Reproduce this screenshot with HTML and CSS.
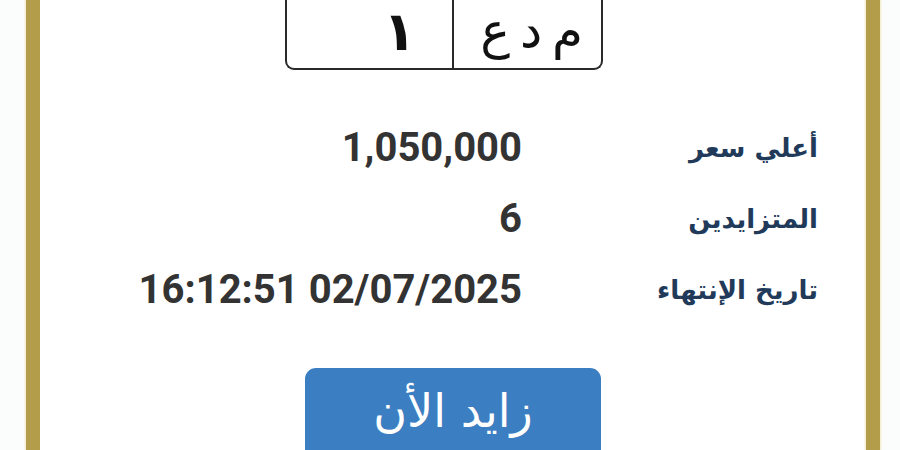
FILE: index.html
```html
<!DOCTYPE html>
<html lang="ar">
<head>
<meta charset="utf-8">
<link rel="stylesheet" href="styles.css">
</head>
<body>
<div class="frame">
  <div class="bar"></div>
  <main class="card">
    <div class="plate" dir="rtl">
      <div class="cell letters">م د ع</div>
      <div class="cell number">١</div>
    </div>
    <div class="rows" dir="rtl">
      <div class="label">أعلي سعر</div>
      <div class="value" dir="ltr">1,050,000</div>
      <div class="label">المتزايدين</div>
      <div class="value" dir="ltr">6</div>
      <div class="label">تاريخ الإنتهاء</div>
      <div class="value" dir="ltr">16:12:51 02/07/2025</div>
    </div>
    <button class="bid">زايد الأن</button>
  </main>
  <div class="bar"></div>
</div>
</body>
</html>
```
FILE: styles.css
```css
html, body {
  margin: 0;
  padding: 0;
  background: #fbfdfd;
  overflow: hidden;
}
.frame {
  display: flex;
  height: 450px;
  padding-left: 26px;
  overflow: hidden;
}
.bar {
  width: 14px;
  flex: none;
  background: #b39d4b;
  box-shadow: 0 0 2px 1px #f3e8c4;
}
.card {
  width: 826px;
  flex: none;
  background: #ffffff;
  display: flex;
  flex-direction: column;
  align-items: flex-start;
}
.card > * {
  flex: none;
}
.plate {
  margin-left: 245px;
  width: 318px;
  height: 70px;
  box-sizing: border-box;
  border: 2.5px solid #2a2a2a;
  border-top: none;
  border-radius: 0 0 9px 9px;
  display: flex;
  background: #fff;
}
.cell {
  flex: 1;
  display: flex;
  align-items: center;
  justify-content: flex-start;
  font-family: "DejaVu Sans", sans-serif;
  color: #111;
  line-height: 1;
  padding-bottom: 6px;
}
.letters {
  font-size: 50px;
  padding-right: 18px;
  border-left: 2.5px solid #2a2a2a;
  word-spacing: -6px;
}
.number {
  font-size: 54px;
  padding-right: 36px;
  padding-bottom: 4px;
  font-weight: bold;
}
.rows {
  margin-top: 42px;
  width: 778px;
  display: grid;
  grid-template-columns: 296px 1fr;
  grid-auto-rows: 71px;
  align-items: center;
}
.label {
  font-family: "DejaVu Sans", sans-serif;
  font-weight: bold;
  font-size: 26px;
  color: #223a5a;
  text-align: right;
}
.value {
  font-family: Roboto, "Liberation Sans", sans-serif;
  font-weight: 700;
  font-size: 40px;
  color: #333333;
  text-align: right;
  white-space: nowrap;
}
.bid {
  margin-top: 43px;
  margin-left: 265px;
  width: 296px;
  height: 110px;
  border: none;
  border-radius: 11px;
  background: #3b7ec1;
  color: #fff;
  font-family: "DejaVu Sans", sans-serif;
  font-size: 46px;
  padding: 16px 0 0;
  display: flex;
  justify-content: center;
  align-items: flex-start;
}
```
